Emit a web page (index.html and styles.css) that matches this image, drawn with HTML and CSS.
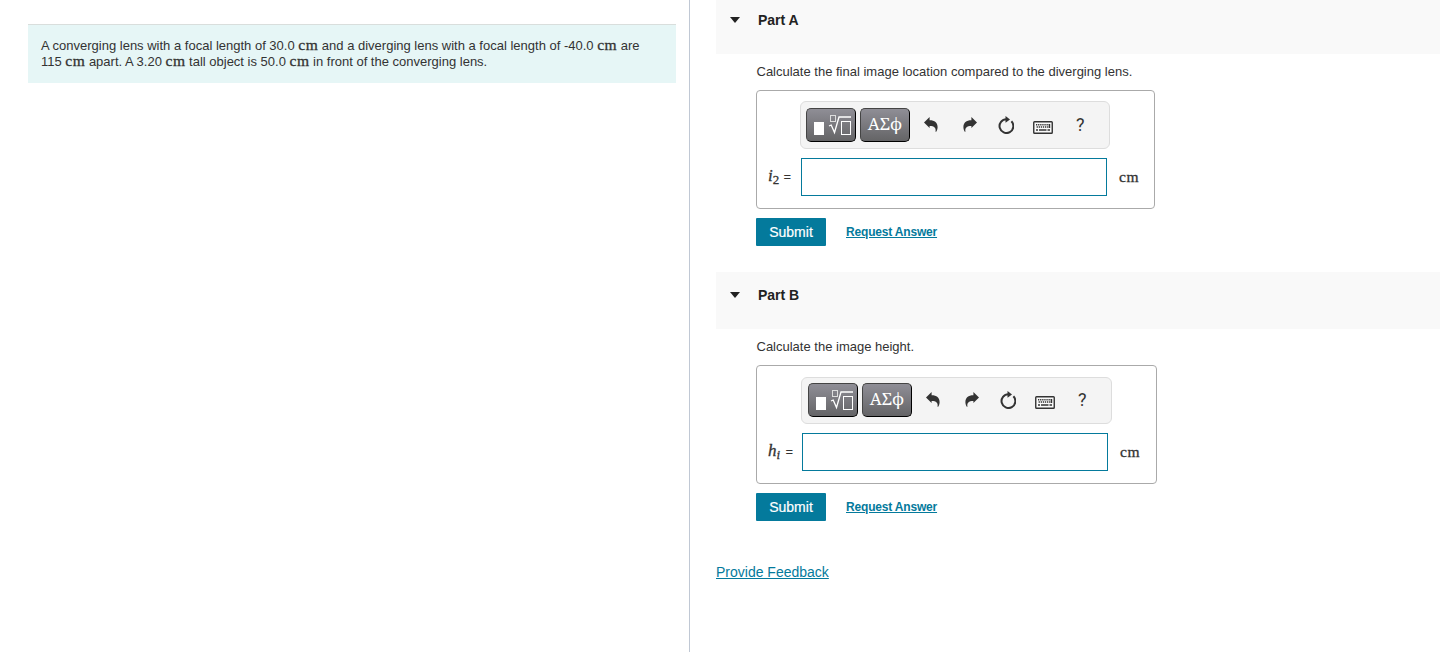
FILE: index.html
```html
<!DOCTYPE html>
<html lang="en">
  <head>
    <meta charset="UTF-8" />
    <meta name="viewport" content="width=device-width, initial-scale=1.0" />
    <title>Converging and diverging lens</title>
    <link rel="stylesheet" href="styles.css">
  </head>
  <body>
    <!-- shared icons -->
    <svg class="sprite" width="0" height="0">
      <symbol id="icon-templates" viewBox="0 0 38 24">
        <rect x="1" y="8" width="10" height="13" fill="#fff" />
        <rect x="17.5" y="1.5" width="5" height="6" fill="none" stroke="#ddd" />
        <path d="M16 12l2.2-1 3.3 7.5L26 3H38" fill="none" stroke="#fff" stroke-width="1.3" />
        <rect x="28.5" y="7.5" width="9" height="13" fill="none" stroke="#fff" />
      </symbol>
      <symbol id="icon-undo" viewBox="0 0 14 16">
        <path d="M0 5.5L5.6 0v3.3C10.8 3.3 13.6 6 13.6 10c0 1.8-.5 3.3-1.4 4.7h-.7c.8-3.8-1.2-5.7-5.9-5.7v2z" fill="#333" />
      </symbol>
      <symbol id="icon-reset" viewBox="0 0 16 18">
        <path d="M8.5 3.2a6.9 6.9 0 1 0 4.9 2.1" fill="none" stroke="#333" stroke-width="2" />
        <path d="M7.5 0l4.5 3.4-4.5 3.4z" fill="#333" />
      </symbol>
      <symbol id="icon-keyboard" viewBox="0 0 20 13">
        <rect x=".75" y=".75" width="18.5" height="11.5" rx=".8" fill="#fafafa" stroke="#333" stroke-width="1.4" />
        <path d="M3 3.7h14M3.6 6h13" fill="none" stroke="#333" stroke-width="1.4" stroke-dasharray="1.3 .8" />
        <path d="M3 9h2M6 9h7.5M14.5 9h2.5M16.5 3v4" fill="none" stroke="#333" stroke-width="1.4" />
      </symbol>
    </svg>

    <div class="page">
      <div class="intro-pane">
        <p class="problem">
          A converging lens with a focal length of 30.0 <span class="unit">cm</span> and a diverging lens with a focal length of -40.0 <span class="unit">cm</span> are<br>
          115 <span class="unit">cm</span> apart. A 3.20 <span class="unit">cm</span> tall object is 50.0 <span class="unit">cm</span> in front of the converging lens.
        </p>
      </div>

      <div class="parts-pane">
        <section class="part">
          <div class="part-header">
            <span class="arrow"></span>
            <h2>Part A</h2>
          </div>
          <div class="part-body">
            <p class="question">Calculate the final image location compared to the diverging lens.</p>
            <div class="answer-box">
              <div class="toolbar">
                <button class="tool-dark"><svg width="38" height="24"><use href="#icon-templates" /></svg></button>
                <button class="tool-dark">ΑΣϕ</button>
                <div class="tools">
                  <svg class="undo" width="14" height="16"><use href="#icon-undo" /></svg>
                  <svg class="redo" width="14" height="16"><use href="#icon-undo" /></svg>
                  <svg class="reset" width="16" height="18"><use href="#icon-reset" /></svg>
                  <svg class="keyboard" width="20" height="13"><use href="#icon-keyboard" /></svg>
                  <span class="help">?</span>
                </div>
              </div>
              <div class="answer-row">
                <label for="answer-a"><i>i</i><sub>2</sub> <span class="equals">=</span></label>
                <input id="answer-a" type="text">
                <span class="unit">cm</span>
              </div>
            </div>
            <div class="actions">
              <button class="submit">Submit</button>
              <a class="request" href="#">Request Answer</a>
            </div>
          </div>
        </section>

        <section class="part part-b">
          <div class="part-header">
            <span class="arrow"></span>
            <h2>Part B</h2>
          </div>
          <div class="part-body">
            <p class="question">Calculate the image height.</p>
            <div class="answer-box">
              <div class="toolbar">
                <button class="tool-dark"><svg width="38" height="24"><use href="#icon-templates" /></svg></button>
                <button class="tool-dark">ΑΣϕ</button>
                <div class="tools">
                  <svg class="undo" width="14" height="16"><use href="#icon-undo" /></svg>
                  <svg class="redo" width="14" height="16"><use href="#icon-undo" /></svg>
                  <svg class="reset" width="16" height="18"><use href="#icon-reset" /></svg>
                  <svg class="keyboard" width="20" height="13"><use href="#icon-keyboard" /></svg>
                  <span class="help">?</span>
                </div>
              </div>
              <div class="answer-row">
                <label for="answer-b"><i>h</i><sub><i>i</i></sub> <span class="equals">=</span></label>
                <input id="answer-b" type="text">
                <span class="unit">cm</span>
              </div>
            </div>
            <div class="actions">
              <button class="submit">Submit</button>
              <a class="request" href="#">Request Answer</a>
            </div>
          </div>
        </section>

        <a class="feedback" href="#">Provide Feedback</a>
      </div>
    </div>
  </body>
</html>
```
FILE: styles.css
```css
* {
  box-sizing: border-box;
  margin: 0;
  padding: 0;
}
html,
body {
  height: 100%;
  overflow: hidden;
}
body {
  background: #fff;
  color: #333;
  font-family: "Liberation Sans", Arial, sans-serif;
  font-size: 13px;
}
.sprite {
  display: none;
}
.page {
  display: flex;
  height: 100%;
}
.intro-pane {
  width: 690px;
  padding: 24px 13px 0 28px;
  border-right: 1px solid #c0c8d4;
}
.problem {
  height: 59px;
  padding: 13px 0 0 13px;
  background: #e6f6f6;
  border-top: 1px solid #d9dedc;
  line-height: 16px;
  white-space: nowrap;
}
.unit {
  font-family: "Liberation Serif", "Times New Roman", serif;
  font-size: 15.5px;
  line-height: 0;
  letter-spacing: 0.5px;
  -webkit-text-stroke: 0.3px #333;
}

.parts-pane {
  flex: 1;
  padding-left: 26px;
}
.part {
  height: 272px;
}
.part-header {
  display: flex;
  height: 54px;
  padding: 12px 0 0 14px;
  background: #f9f9f9;
}
.arrow {
  width: 0;
  height: 0;
  margin: 5px 17px 0 0;
  border: 5.5px solid transparent;
  border-top: 6px solid #222;
  border-bottom: 0;
}
h2 {
  padding-left: 1px;
  color: #222;
  font-size: 14px;
  line-height: 16px;
}
.part-body {
  padding-left: 40px;
}
.question {
  height: 36px;
  padding: 10px 0 0 0.5px;
  line-height: 16px;
}
.answer-box {
  width: 399px;
  height: 119px;
  padding: 10px 0 0 11px;
  border: 1px solid #aaa;
  border-radius: 4px;
}
.toolbar {
  display: flex;
  gap: 4px;
  width: 310px;
  height: 48px;
  margin-left: 32px;
  padding: 6px 0 0 5px;
  background: #f4f4f4;
  border: 1px solid #ddd;
  border-radius: 6px;
}
.tool-dark {
  display: flex;
  align-items: center;
  justify-content: center;
  width: 50px;
  height: 34px;
  padding-bottom: 3px;
  background: linear-gradient(#8f8e96, #646466);
  border: 1px solid #000;
  border-top-color: #444;
  border-left-color: #444;
  border-radius: 5px;
  color: #fff;
  font-family: "Noto Serif", "DejaVu Serif", "Liberation Serif", serif;
  font-size: 17px;
}
.tool-dark svg {
  margin: 4px 0 0 1px;
}
.tools {
  display: flex;
  align-items: center;
  height: 34px;
}
.undo {
  margin: 0 25px 0 10px;
}
.redo {
  margin-right: 21px;
  transform: scaleX(-1);
}
.reset {
  margin-right: 19px;
}
.keyboard {
  margin: 4px 23px 0 0;
}
.help {
  padding-bottom: 1px;
  font-family: Roboto, "Open Sans", sans-serif;
  font-size: 18px;
}
.answer-row {
  display: flex;
  align-items: center;
  height: 38px;
  margin-top: 9px;
}
.answer-row .unit {
  padding-bottom: 1px;
}
label {
  width: 33px;
  padding-bottom: 2px;
  font-family: "Liberation Serif", "Times New Roman", serif;
  font-size: 17px;
  white-space: nowrap;
  -webkit-text-stroke: 0.3px #333;
}
sub {
  font-size: 13px;
  line-height: 0;
  vertical-align: -3px;
}
.equals {
  font-family: "Liberation Sans", Arial, sans-serif;
  font-size: 13px;
  -webkit-text-stroke: 0;
}
input {
  width: 306px;
  height: 38px;
  margin-right: 12px;
  border: 1px solid #047a9c;
  outline: none;
}
.actions {
  display: flex;
  align-items: center;
  gap: 20px;
  margin-top: 9px;
}
.submit {
  width: 70px;
  height: 28px;
  background: #047a9c;
  border: 0;
  border-radius: 1px;
  color: #fff;
  font-family: inherit;
  font-size: 14px;
  -webkit-text-stroke: 0.2px #fff;
}
.request {
  color: #047a9c;
  font-size: 12px;
  font-weight: bold;
  letter-spacing: -0.18px;
}
.part-b {
  height: 292px;
}
.part-b .part-header {
  height: 57px;
  padding-top: 15px;
}
.part-b .answer-box {
  width: 401px;
}
.part-b .toolbar {
  width: 311px;
  height: 47px;
  margin: 1px 0 0 33px;
  padding: 5px 0 0 6px;
}
.part-b label {
  width: 34px;
}
.part-b sub {
  padding-right: 1px;
}
.feedback {
  color: #047a9c;
  font-size: 14px;
  line-height: 16px;
}
```
